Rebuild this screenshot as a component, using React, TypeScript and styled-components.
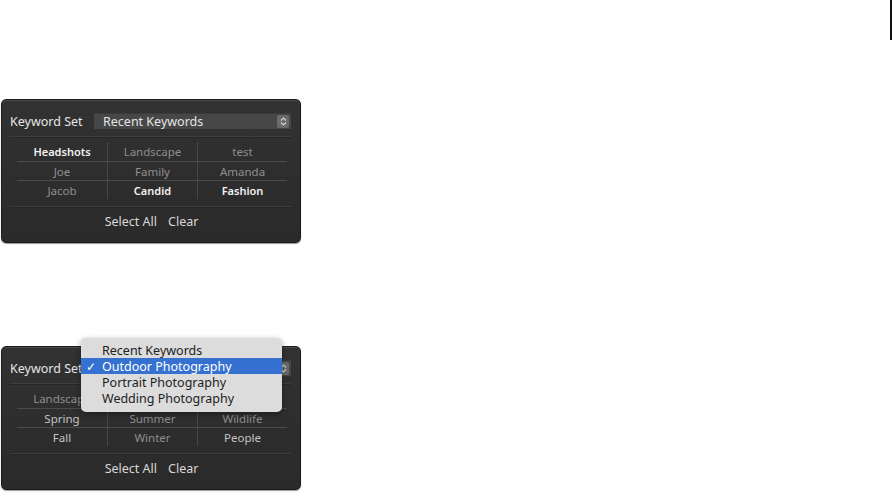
import React from "react";
import styled, { createGlobalStyle } from "styled-components";

const GlobalStyle = createGlobalStyle`
  html, body {
    margin: 0;
    padding: 0;
    background: #ffffff;
  }
  body {
    font-family: "Noto Sans", "Open Sans", sans-serif;
  }
`;

type Keyword = { label: string; tone: "on" | "mid" | "off" };

const recentKeywords: Keyword[] = [
  { label: "Headshots", tone: "on" },
  { label: "Landscape", tone: "off" },
  { label: "test", tone: "off" },
  { label: "Joe", tone: "off" },
  { label: "Family", tone: "off" },
  { label: "Amanda", tone: "off" },
  { label: "Jacob", tone: "off" },
  { label: "Candid", tone: "on" },
  { label: "Fashion", tone: "on" },
];

// the middle and right cells of the first row sit under the open menu
const outdoorKeywords: Keyword[] = [
  { label: "Landscape", tone: "off" },
  { label: "", tone: "off" },
  { label: "", tone: "off" },
  { label: "Spring", tone: "mid" },
  { label: "Summer", tone: "off" },
  { label: "Wildlife", tone: "off" },
  { label: "Fall", tone: "mid" },
  { label: "Winter", tone: "off" },
  { label: "People", tone: "mid" },
];

const sets = [
  "Recent Keywords",
  "Outdoor Photography",
  "Portrait Photography",
  "Wedding Photography",
];

const Stepper: React.FC = () => (
  <StepperBox>
    <svg width="7" height="9" viewBox="0 0 7 9">
      <path d="M1 3.5 L3.5 1 L6 3.5" fill="none" stroke="#d0d0d0" strokeWidth="1.2" />
      <path d="M1 5.5 L3.5 8 L6 5.5" fill="none" stroke="#d0d0d0" strokeWidth="1.2" />
    </svg>
  </StepperBox>
);

interface KeywordPanelProps {
  current: string;
  keywords: Keyword[];
  menuOpen?: boolean;
}

const KeywordPanel: React.FC<KeywordPanelProps> = ({ current, keywords, menuOpen }) => (
  <Panel>
    <Header>
      <Label>Keyword Set</Label>
      <Select>
        <span>{menuOpen ? "" : current}</span>
        <Stepper />
      </Select>
    </Header>
    <Rule />
    <Grid>
      {keywords.map((k, i) => (
        <Cell key={i} $tone={k.tone} $col={i % 3} $row={Math.floor(i / 3)}>
          {k.label}
        </Cell>
      ))}
    </Grid>
    <Rule />
    <Footer>
      <FooterButton>Select All</FooterButton>
      <FooterButton>Clear</FooterButton>
    </Footer>
    {menuOpen && (
      <Menu>
        {sets.map((s) => (
          <MenuItem key={s} $selected={s === current}>
            <Check>{s === current ? "✓" : ""}</Check>
            {s}
          </MenuItem>
        ))}
      </Menu>
    )}
  </Panel>
);

const App: React.FC = () => (
  <>
    <GlobalStyle />
    <Page>
      <Column>
        <KeywordPanel current="Recent Keywords" keywords={recentKeywords} />
        <KeywordPanel current="Outdoor Photography" keywords={outdoorKeywords} menuOpen />
      </Column>
      <EdgeLine />
    </Page>
  </>
);

export default App;

const Page = styled.div`
  width: 893px;
  height: 492px;
  display: flex;
  justify-content: space-between;
  align-items: flex-start;
  overflow: hidden;
`;

const Column = styled.div`
  display: flex;
  flex-direction: column;
  gap: 103px;
  padding: 99px 0 0 1px;
`;

const EdgeLine = styled.div`
  width: 2px;
  height: 40px;
  margin-right: 1px;
  background: #111;
`;

const Panel = styled.div`
  position: relative;
  box-sizing: border-box;
  width: 300px;
  height: 144px;
  border-radius: 5px;
  border: 1px solid #1c1c1c;
  background: linear-gradient(#323232, #2a2a2a);
  box-shadow: inset 0 1px 0 #4a4a4a, 0 1px 1px #9a9a9a;
  padding: 13px 9px 0 8px;
  color: #dcdcdc;
  font-size: 12px;
`;

const Header = styled.div`
  display: flex;
  align-items: center;
  height: 16px;
`;

const Label = styled.div`
  width: 84px;
  font-size: 12.5px;
  color: #e6e6e6;
  white-space: nowrap;
`;

const Select = styled.div`
  flex: 1;
  height: 16px;
  display: flex;
  align-items: center;
  justify-content: space-between;
  padding-left: 9px;
  background: #474747;
  box-shadow: inset 0 1px 0 #3a3a3a;
  font-size: 12.5px;
  color: #e4e4e4;
`;

const StepperBox = styled.div`
  width: 12px;
  height: 13px;
  margin-right: 2px;
  display: flex;
  align-items: center;
  justify-content: center;
  background: #6a6a6a;
  border-radius: 2px;
`;

const Rule = styled.div`
  height: 1px;
  margin: 7px 0 0 0;
  background: #3e3e3e;
  border-bottom: 1px solid #262626;
`;

const Grid = styled.div`
  display: grid;
  grid-template-columns: repeat(3, 90px);
  grid-auto-rows: 19px;
  margin: 4px 0 7px 7px;
`;

const Cell = styled.div<{ $tone: "on" | "mid" | "off"; $col: number; $row: number }>`
  display: flex;
  align-items: center;
  justify-content: center;
  font-size: ${(p) => (p.$tone === "on" ? "11px" : "11.5px")};
  font-weight: ${(p) => (p.$tone === "on" ? 600 : 400)};
  color: ${(p) => (p.$tone === "on" ? "#f2f2f2" : p.$tone === "mid" ? "#c4c4c4" : "#8e8e8e")};
  border-left: ${(p) => (p.$col > 0 ? "1px solid #474747" : "none")};
  border-top: ${(p) => (p.$row > 0 ? "1px solid #4a4a4a" : "none")};
`;

const Footer = styled.div`
  display: flex;
  justify-content: center;
  gap: 11px;
  padding-top: 5px;
  margin-left: 2px;
`;

const FooterButton = styled.span`
  font-size: 12.5px;
  color: #d8d8d8;
`;

const Menu = styled.div`
  position: absolute;
  left: 79px;
  top: -9px;
  width: 201px;
  padding: 4px 0 6px;
  border-radius: 5px;
  background: #dcdcdc;
  box-shadow: 0 2px 6px rgba(0, 0, 0, 0.35);
  z-index: 2;
`;

const MenuItem = styled.div<{ $selected: boolean }>`
  display: flex;
  align-items: center;
  height: 16px;
  font-size: 12.5px;
  color: ${(p) => (p.$selected ? "#ffffff" : "#222222")};
  background: ${(p) => (p.$selected ? "#3571d0" : "transparent")};
`;

const Check = styled.span`
  width: 21px;
  padding-left: 5px;
  box-sizing: border-box;
  font-size: 12px;
`;
